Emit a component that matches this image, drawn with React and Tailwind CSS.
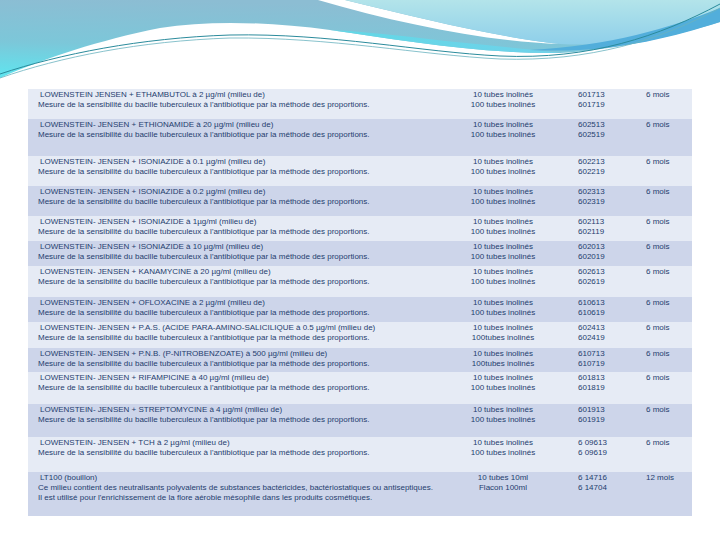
import React from "react";

const M = "Mesure de la sensibilité du bacille tuberculeux à l'antibiotique par la méthode des proportions.";
const T = ["10 tubes inolinés", "100 tubes inolinés"];
const T2 = ["10 tubes inolinés", "100tubes inolinés"];

const rows = [
  { t: "LOWENSTEIN JENSEN + ETHAMBUTOL à 2 µg/ml (milieu de)", d: [M], q: T, c: ["601713", "601719"], s: "6 mois", h: "h-[30px]" },
  { t: "LOWENSTEIN- JENSEN + ETHIONAMIDE à 20 µg/ml (milieu de)", d: [M], q: T, c: ["602513", "602519"], s: "6 mois", h: "h-[37px]" },
  { t: "LOWENSTEIN- JENSEN + ISONIAZIDE à 0.1 µg/ml (milieu de)", d: [M], q: T, c: ["602213", "602219"], s: "6 mois", h: "h-[30px]" },
  { t: "LOWENSTEIN- JENSEN + ISONIAZIDE à 0.2 µg/ml (milieu de)", d: [M], q: T, c: ["602313", "602319"], s: "6 mois", h: "h-[30px]" },
  { t: "LOWENSTEIN- JENSEN + ISONIAZIDE à 1µg/ml (milieu de)", d: [M], q: T, c: ["602113", "602119"], s: "6 mois", h: "h-[25px]" },
  { t: "LOWENSTEIN- JENSEN + ISONIAZIDE à 10 µg/ml (milieu de)", d: [M], q: T, c: ["602013", "602019"], s: "6 mois", h: "h-[25px]" },
  { t: "LOWENSTEIN- JENSEN + KANAMYCINE à 20 µg/ml (milieu de)", d: [M], q: T, c: ["602613", "602619"], s: "6 mois", h: "h-[31px]" },
  { t: "LOWENSTEIN- JENSEN + OFLOXACINE à 2 µg/ml (milieu de)", d: [M], q: T, c: ["610613", "610619"], s: "6 mois", h: "h-[25px]" },
  { t: "LOWENSTEIN- JENSEN + P.A.S. (ACIDE PARA-AMINO-SALICILIQUE à 0.5 µg/ml (milieu de)", d: [M], q: T2, c: ["602413", "602419"], s: "6 mois", h: "h-[26px]" },
  { t: "LOWENSTEIN- JENSEN + P.N.B. (P-NITROBENZOATE) à 500 µg/ml (milieu de)", d: [M], q: T2, c: ["610713", "610719"], s: "6 mois", h: "h-[24px]" },
  { t: "LOWENSTEIN- JENSEN + RIFAMPICINE à 40 µg/ml (milieu de)", d: [M], q: T, c: ["601813", "601819"], s: "6 mois", h: "h-[32px]" },
  { t: "LOWENSTEIN- JENSEN + STREPTOMYCINE à 4 µg/ml (milieu de)", d: [M], q: T, c: ["601913", "601919"], s: "6 mois", h: "h-[33px]" },
  { t: "LOWENSTEIN- JENSEN + TCH à 2 µg/ml (milieu de)", d: [M], q: T, c: ["6 09613", "6 09619"], s: "6 mois", h: "h-[35px]" },
  {
    t: "LT100 (bouillon)",
    d: [
      "Ce milieu contient des neutralisants polyvalents de substances bactéricides, bactériostatiques ou antiseptiques.",
      "Il est utilisé pour l'enrichissement de la flore aérobie mésophile dans les produits cosmétiques.",
    ],
    q: ["10 tubes 10ml", "Flacon 100ml"],
    c: ["6 14716", "6 14704"],
    s: "12 mois",
    h: "h-[44px]",
  },
];

function Header() {
  return (
    <svg width="720" height="89" viewBox="0 0 720 89" className="block">
      <defs>
        <linearGradient id="g1" x1="0.2" y1="0" x2="0" y2="1">
          <stop offset="0" stopColor="#8cbdd3" />
          <stop offset="0.55" stopColor="#7cc7d9" />
          <stop offset="1" stopColor="#5ee6f0" />
        </linearGradient>
        <linearGradient id="g2" x1="0" y1="0" x2="0" y2="1">
          <stop offset="0" stopColor="#b3e4ea" />
          <stop offset="1" stopColor="#8ecfea" />
        </linearGradient>
        <linearGradient id="g3" x1="0" y1="0" x2="1" y2="0">
          <stop offset="0" stopColor="#62d8e6" />
          <stop offset="1" stopColor="#6fd2ea" />
        </linearGradient>
      </defs>
      <path
        d="M0,0 H720 V22 C680,34 620,50 560,53 C480,54 400,40 330,30 C270,22 210,20 160,28 C100,40 45,58 0,78 Z"
        fill="url(#g1)"
      />
      <path d="M330,30 C400,40 480,54 560,53 C520,48 470,44 420,38 C385,34 355,31 330,30 Z" fill="url(#g3)" />
      <path d="M318,0 L345,0 C420,18 490,36 560,44 C490,42 400,24 318,0 Z" fill="#ffffff" />
      <path d="M345,0 C420,18 490,36 560,44 C620,48 680,32 720,14 V0 Z" fill="url(#g2)" />
      <path d="M530,50 C610,46 670,28 720,8 V22 C670,38 610,54 530,50 Z" fill="#52aedb" />
      <path
        d="M0,74 C60,54 140,38 230,35 C330,33 420,52 500,56 C590,60 660,36 720,4"
        fill="none"
        stroke="#2b8b9c"
        strokeWidth="1"
      />
      <path
        d="M0,78 C60,57 140,41 230,38 C330,37 420,55 500,59 C590,62 660,40 720,8"
        fill="none"
        stroke="#6ab3bf"
        strokeWidth="0.8"
      />
    </svg>
  );
}

export default function App() {
  return (
    <div className="w-[720px] h-[540px] bg-white overflow-hidden font-['Liberation_Sans',Arial,sans-serif] text-[8px] leading-[10px] text-[#1f3d6e]">
      <Header />
      <div className="ml-[28px] w-[664px] flex flex-col">
        {rows.map((r, i) => (
          <div
            key={i}
            className={`grid grid-cols-[432px_86px_74px_72px] pt-[1px] ${r.h} ${i % 2 === 0 ? "bg-[#e6ebf5]" : "bg-[#cdd5ea]"}`}
          >
            <div className="pl-[10px] whitespace-nowrap">
              <div className="pl-[2px]">{r.t}</div>
              {r.d.map((l, j) => (
                <div key={j}>{l}</div>
              ))}
            </div>
            <div className="flex flex-col items-center whitespace-nowrap">
              {r.q.map((l, j) => (
                <div key={j}>{l}</div>
              ))}
            </div>
            <div className="pl-[32px] whitespace-nowrap">
              {r.c.map((l, j) => (
                <div key={j}>{l}</div>
              ))}
            </div>
            <div className="pl-[26px] whitespace-nowrap">{r.s}</div>
          </div>
        ))}
      </div>
    </div>
  );
}
